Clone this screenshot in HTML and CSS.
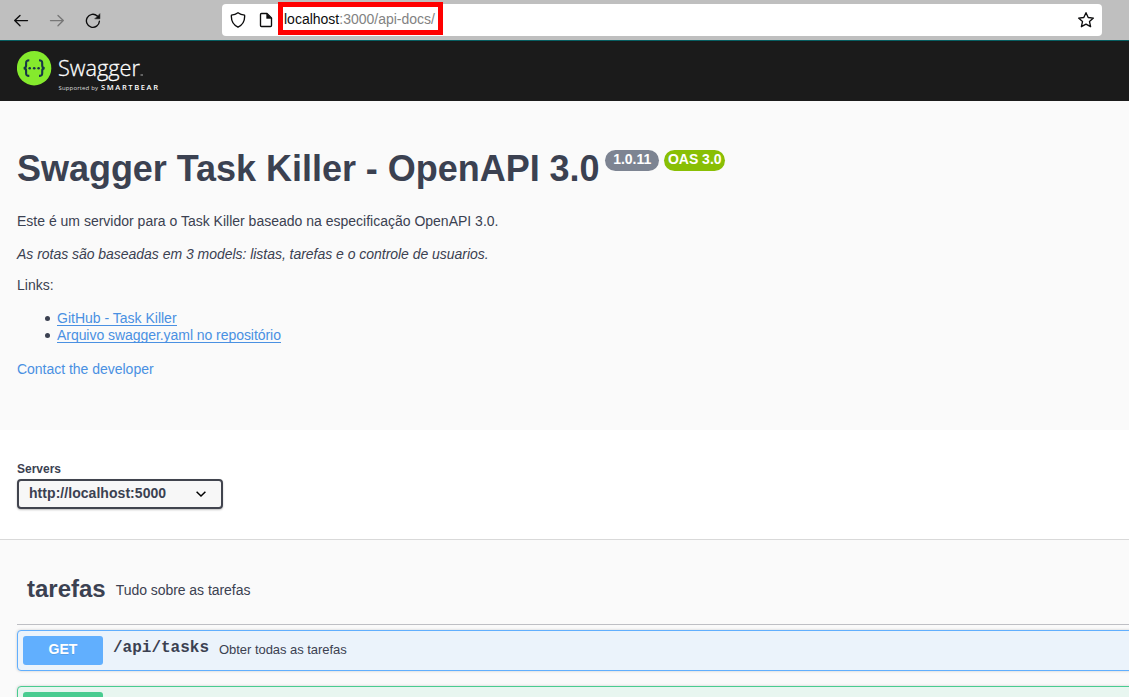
FILE: index.html
```html
<!DOCTYPE html>
<html lang="pt-BR">
<head>
<meta charset="utf-8">
<title>Swagger Task Killer</title>
<link rel="stylesheet" href="styles.css">
</head>
<body>
<header class="browser">
  <nav class="nav-buttons">
    <svg width="16" height="16" viewBox="0 0 16 16" class="icon"><path d="M14.500 7.600H1.700M7 2.400 1.700 7.600 7 12.800"/></svg>
    <svg width="16" height="16" viewBox="0 0 16 16" class="icon icon-disabled"><path d="M1.500 7.600H14.300M9 2.400l5.300 5.200L9 12.800"/></svg>
    <svg width="16" height="16" viewBox="0 0 16 16" class="icon"><path d="M12.300 3A6.500 6.500 0 1 0 14.400 8.200"/><path class="solid" d="M14.900 1v4.800h-4.800z"/></svg>
  </nav>
  <div class="address">
    <svg width="16" height="16" viewBox="0 0 16 16" class="icon shield"><path d="M8 .8C6.300 2 3.800 2.900 1.400 3.200 1 8.400 3.400 13 8 15.200 12.600 13 15 8.400 14.600 3.200 12.200 2.900 9.700 2 8 .8z"/></svg>
    <svg width="16" height="16" viewBox="0 0 16 16" class="icon page"><path d="M3.500 1.500H9l4.500 4.500v7.500q0 1-1 1h-9q-1 0-1-1v-11q0-1 1-1z"/><path class="solid" d="M8.600 1.700V6.400h4.700z"/></svg>
    <span class="url"><b>localhost</b>:3000/api-docs/</span>
    <svg width="18" height="18" viewBox="0 0 18 18" class="icon star"><path d="m9 1.700 2.200 4.800 5.200.6-3.900 3.500 1.100 5.100L9 13.100l-4.600 2.600 1.100-5.100L1.600 7.100l5.200-.6z"/></svg>
  </div>
</header>
<div class="topbar">
  <svg width="150" height="50" viewBox="0 0 150 50">
    <circle cx="17.100" cy="22.200" r="17.200" fill="#85ea2d"/>
    <g fill="none" stroke="#173647" stroke-width="2.100">
      <path d="M12.300 14.300c-2.500 0-3.200.6-3.200 2.700v2.500c0 1.800-.7 2.600-2.500 2.600 1.800 0 2.500.8 2.500 2.600v2.500c0 2.100.7 2.700 3.200 2.700"/>
      <path d="M22 14.300c2.500 0 3.200.6 3.200 2.700v2.500c0 1.800.7 2.600 2.500 2.600-1.800 0-2.500.8-2.500 2.600v2.500c0 2.100-.7 2.700-3.200 2.700"/>
    </g>
    <g fill="#173647"><circle cx="12.700" cy="22.200" r="1.300"/><circle cx="17.200" cy="22.200" r="1.300"/><circle cx="21.600" cy="22.200" r="1.300"/></g>
    <text class="brand" x="41" y="30" textLength="82" lengthAdjust="spacingAndGlyphs">Swagger</text>
    <rect x="123.500" y="28.500" width="2.500" height="1" fill="#aaa"/>
    <text class="brand-small" x="41.500" y="43.500" textLength="39.500">Supported by</text>
    <text class="brand-bear" x="84" y="43.500" textLength="57">SMARTBEAR</text>
  </svg>
</div>
<main>
  <section class="info">
    <h1>Swagger Task Killer - OpenAPI 3.0 <span class="badges"><span class="badge version">1.0.11</span><span class="badge oas">OAS 3.0</span></span></h1>
    <p class="intro">Este é um servidor para o Task Killer baseado na especificação OpenAPI 3.0.</p>
    <p class="models">As rotas são baseadas em 3 models: listas, tarefas e o controle de usuarios.</p>
    <p class="links-label">Links:</p>
    <ul>
      <li><a href="#">GitHub - Task Killer</a></li>
      <li><a href="#">Arquivo swagger.yaml no repositório</a></li>
    </ul>
    <a class="contact" href="#">Contact the developer</a>
  </section>
  <section class="servers">
    <div class="servers-title">Servers</div>
    <div class="select"><span>http://localhost:5000</span>
      <svg width="12" height="8" viewBox="0 0 12 8"><path d="M1.600 1.700 6 6l4.400-4.300"/></svg>
    </div>
  </section>
  <section class="operations">
    <div class="tag"><h2>tarefas</h2><span>Tudo sobre as tarefas</span></div>
    <div class="op get"><span class="method">GET</span><code>/api/tasks</code><span class="summary">Obter todas as tarefas</span></div>
    <div class="op post"><span class="method"></span></div>
  </section>
</main>
</body>
</html>
```
FILE: styles.css
```css
* { box-sizing: border-box; }
html, body { height: 697px; overflow: hidden; }
body {
  margin: 0;
  background: #fafafa;
  color: #3b4151;
  font: 14px/17px "Liberation Sans", Arial, sans-serif;
}
p, h1, h2, ul { margin: 0; }
a { color: #4990e2; text-decoration: none; }

.browser {
  display: flex;
  height: 41px;
  background: #bfbfbf;
  border-bottom: 1px solid #075e61;
}
.nav-buttons { display: flex; gap: 20px; width: 222px; padding: 13px 0 0 13px; }
.icon { display: block; flex: none; fill: none; stroke: #0c0c0d; stroke-width: 1.350; stroke-linecap: round; stroke-linejoin: round; }
.icon-disabled { stroke: #777; }
.solid { fill: #0c0c0d; stroke-width: 0.500; }
.address {
  display: flex;
  align-items: center;
  width: 880px;
  height: 32px;
  margin-top: 4px;
  padding: 0 7px 0 8px;
  background: #fff;
  border-radius: 4px;
}
.page { margin-left: 12px; }
.url {
  width: 165px;
  height: 33px;
  margin: -3px 0 0 4px;
  padding: 1px 0 0 1px;
  border: 5px solid #f00;
  color: #828282;
  font-size: 14px;
  line-height: 22px;
  white-space: nowrap;
}
.url b { color: #0c0c0d; font-weight: 400; }
.star { margin-left: auto; }

.topbar { height: 60px; padding: 5px 17px; background: #1b1b1b; }
.topbar svg { display: block; }
.brand { fill: #fff; stroke: #fff; stroke-width: 0.300; font: 300 22.500px "Open Sans", sans-serif; }
.brand-small { fill: #ddd; font: 6px "Open Sans", sans-serif; }
.brand-bear { fill: #fff; font: 600 7.600px "Open Sans", sans-serif; }

.info { height: 329px; padding: 47px 17px 0; }
h1 { display: flex; height: 42px; font-size: 36px; line-height: 42px; letter-spacing: -0.030px; white-space: nowrap; }
.badges { display: flex; gap: 5px; margin: 2px 0 0 5.700px; }
.badge {
  height: 21px;
  border-radius: 11px;
  color: #fff;
  font-size: 14px;
  line-height: 19px;
  letter-spacing: 0;
  text-align: center;
}
.version { width: 54px; background: #7d8492; }
.oas { width: 61px; background: #89bf04; }
.intro { margin-top: 23px; }
.models { margin-top: 16px; font-style: italic; letter-spacing: -0.030px; }
.links-label { margin-top: 14px; }
ul { margin-top: 16px; padding-left: 40px; list-style: none; }
li { display: flex; align-items: flex-start; height: 17px; }
li::before {
  content: "";
  width: 5px;
  height: 5px;
  margin: 6px 7px 0 -12px;
  border-radius: 50%;
  background: #3b4151;
}
li a { height: 16px; border-bottom: 1px solid #4990e2; }
li:last-child a { letter-spacing: -0.050px; }
.contact { display: block; margin-top: 17px; letter-spacing: -0.020px; }

.servers {
  height: 110px;
  padding: 31px 17px 0;
  background: #fff;
  border-bottom: 1px solid #d9d9d9;
}
.servers-title { height: 18px; font-size: 12px; font-weight: 700; line-height: 16px; }
.select {
  display: flex;
  align-items: center;
  justify-content: space-between;
  width: 206px;
  height: 30px;
  padding: 0 14px 2px 10px;
  border: 2px solid #41444e;
  border-radius: 4px;
  background: #f7f7f7;
  box-shadow: 0 1px 2px rgba(0, 0, 0, .25);
  font-weight: 700;
  letter-spacing: 0.050px;
}
.select svg { margin-top: 2px; fill: none; stroke: #000; stroke-width: 1.500; }

.operations { padding: 30px 0 0 17px; }
.tag {
  display: flex;
  height: 55px;
  padding-left: 10px;
  border-bottom: 1px solid #bebfc4;
}
h2 { font-size: 24px; line-height: 38px; }
.tag span { margin-left: 10px; line-height: 41px; letter-spacing: -0.050px; }
.op {
  display: flex;
  width: 1130px;
  height: 41px;
  padding: 5px;
  border: 1px solid;
  border-radius: 4px;
  box-shadow: 0 0 3px rgba(0, 0, 0, .19);
}
.get { margin-top: 5px; border-color: #61affe; background: #ebf3fb; }
.post { margin-top: 15px; border-color: #49cc90; background: #e8f6f0; }
.method {
  width: 80px;
  height: 29px;
  border-radius: 3px;
  color: #fff;
  font-weight: 700;
  line-height: 26px;
  text-align: center;
  text-shadow: 0 1px 0 rgba(0, 0, 0, .1);
}
.get .method { background: #61affe; }
.post .method { background: #49cc90; }
code { margin-left: 10px; font: 700 16px/24px "Liberation Mono", monospace; }
.summary { margin-left: 10px; font-size: 13px; line-height: 28px; letter-spacing: -0.040px; }
```
